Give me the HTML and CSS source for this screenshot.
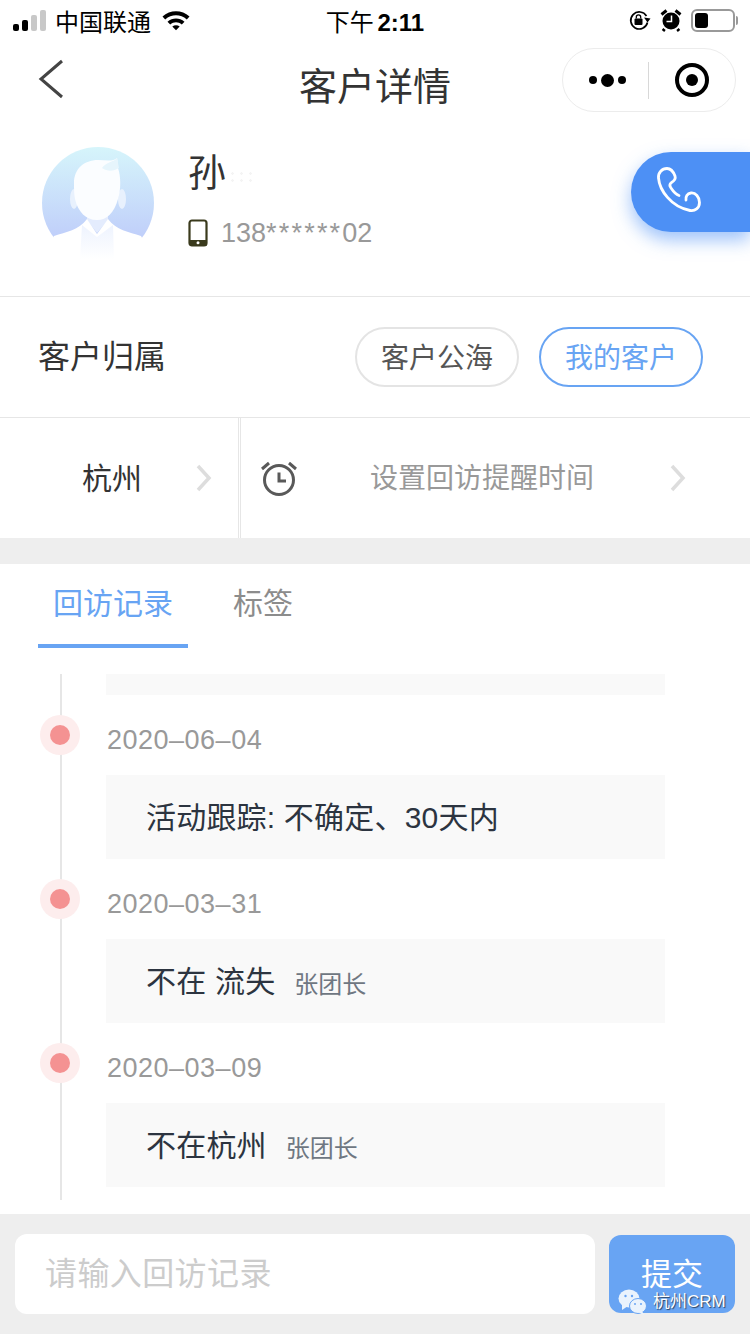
FILE: index.html
```html
<!doctype html>
<html lang="zh-CN">

<head>
    <meta charset="utf-8">
    <meta name="viewport" content="width=device-width, initial-scale=1">
    <title>客户详情</title>
    <link rel="stylesheet" href="styles.css">
</head>

<body>
<div class="page">
    <header class="status-bar">
        <div class="status-left">
            <span class="signal"><i class="on"></i><i class="on"></i><i></i><i></i></span>
            <span class="carrier">中国联通</span>
            <svg class="wifi" width="30" height="22" viewBox="0 0 30 22">
                <path d="M1.500 7.500C9 .5 21 .5 28.500 7.500L25.800 10.400C19.500 4.800 10.500 4.800 4.200 10.400Z" fill="#000"/>
                <path d="M6.500 12.700C11.500 8.300 18.500 8.300 23.500 12.700L20.800 15.500C17.300 12.500 12.700 12.500 9.200 15.500Z" fill="#000"/>
                <path d="M11.300 17.400C13.500 15.700 16.500 15.700 18.700 17.400L15 21.300Z" fill="#000"/>
            </svg>
        </div>
        <div class="status-time">下午 <b>2:11</b></div>
        <div class="status-right">
            <svg width="24" height="22" viewBox="0 0 24 22">
                <path d="M19.500 13.500A8.500 8.500 0 1 1 18.500 7" fill="none" stroke="#000" stroke-width="1.700"/>
                <path d="M16 8.500L22.500 9.500L19.500 13.500Z" fill="#000"/>
                <rect x="6.500" y="9.500" width="8" height="6.500" rx="1" fill="#000"/>
                <path d="M8.300 9.500V8A2.200 2.200 0 0 1 12.700 8V9.500" fill="none" stroke="#000" stroke-width="1.300"/>
            </svg>
            <svg class="alarm" width="22" height="24" viewBox="0 0 22 24">
                <circle cx="11" cy="13" r="8.500" fill="#000"/>
                <path d="M1.500 6.500L6.500 2.500M20.500 6.500L15.500 2.500M4.500 21L3 23M17.500 21L19 23" stroke="#000" stroke-width="3" fill="none"/>
                <path d="M11.500 7.500V13.500H6.500" stroke="#fff" stroke-width="1.500" fill="none"/>
            </svg>
            <span class="battery"><span class="battery-level"></span></span>
        </div>
    </header>

    <nav class="nav-bar">
        <svg class="nav-back" width="28" height="40" viewBox="0 0 28 40">
            <path d="M26 2L5 20L26 38" fill="none" stroke="#444" stroke-width="3"/>
        </svg>
        <h1 class="nav-title">客户详情</h1>
        <div class="capsule">
            <div class="capsule-more"><i></i><i class="big"></i><i></i></div>
            <div class="capsule-line"></div>
            <div class="capsule-close"><span></span></div>
        </div>
    </nav>

    <section class="profile">
        <svg class="avatar" width="112" height="112" viewBox="0 0 112 112">
            <defs>
                <linearGradient id="avatarBg" x1="0" y1="0" x2="0" y2="1">
                    <stop offset="0" stop-color="#d6f5fb"/>
                    <stop offset="0.8" stop-color="#c0cffa"/>
                </linearGradient>
                <linearGradient id="avatarChest" x1="0" y1="0" x2="0" y2="1">
                    <stop offset="0" stop-color="#eef3fe"/>
                    <stop offset="1" stop-color="#ffffff"/>
                </linearGradient>
            </defs>
            <circle cx="56" cy="56" r="56" fill="url(#avatarBg)"/>
            <ellipse cx="32" cy="52" rx="4" ry="10" fill="#e8f1fd"/>
            <ellipse cx="80" cy="52" rx="4" ry="10" fill="#e8f1fd"/>
            <path d="M45 60H66V73L55 86L45 73Z" fill="#e4ecfd"/>
            <path d="M32 36C32 22 42 13 56 13C63 13 71 15 75 11C76 15 75 18 76 21C79 30 79 42 76 52C72 66 65 73 55 73C44 73 36 65 33 52C32 47 32 42 32 36Z" fill="#fbfdff"/>
            <path d="M60 21C66 25 72 24 77 21L75 11C72 15 64 15 60 21Z" fill="#e6f5fc"/>
            <path d="M12 89C24 85 37 83 45 72L55 87L66 72C74 83 87 85 99 89L112 112H0Z" fill="#fff"/>
            <path d="M40 78L55 90L71 78L72 112H38Z" fill="url(#avatarChest)"/>
        </svg>
        <div class="profile-info">
            <div class="customer-name">孙<span class="name-mask"></span></div>
            <div class="customer-phone">
                <svg width="20" height="28" viewBox="0 0 20 28">
                    <rect x="1.500" y="1.500" width="17" height="25" rx="2.500" fill="none" stroke="#3a3a1c" stroke-width="2.200"/>
                    <rect x="1.500" y="21" width="17" height="5.500" fill="#3a3a1c"/>
                    <circle cx="10" cy="23.700" r="1.500" fill="#fff"/>
                </svg>
                <span>138<span class="stars">******</span>02</span>
            </div>
        </div>
        <div class="call-button">
            <svg width="48" height="48" viewBox="0 0 48 48">
                <path d="M14 2.500C9 2.500 5 6.500 5.500 12C6.500 24 18 41 37 44.500C42 45.500 46.500 42 46.500 36.500C46.500 31 42.500 26.500 38 27C34 27.500 32.500 31 33 34M14 2.500C18 2.500 20.500 6 22 10C23 13 21 15 18.500 16.500C16.500 18 16.500 20 18 22C20 25 23 28.500 26 29.500" fill="none" stroke="#fff" stroke-width="2.800" stroke-linecap="round"/>
            </svg>
        </div>
    </section>

    <section class="owner-row">
        <div class="row-label">客户归属</div>
        <div class="owner-options">
            <span class="pill">客户公海</span>
            <span class="pill active">我的客户</span>
        </div>
    </section>

    <section class="picker-row">
        <div class="city-cell">
            <span class="city-name">杭州</span>
            <svg class="chevron" width="16" height="28" viewBox="0 0 16 28">
                <path d="M2 2L13 14L2 26" fill="none" stroke="#dddddd" stroke-width="3.500"/>
            </svg>
        </div>
        <div class="remind-cell">
            <svg width="38" height="36" viewBox="0 0 38 36">
                <circle cx="19" cy="20" r="14.500" fill="none" stroke="#595959" stroke-width="3"/>
                <path d="M19 12.500V21H26" fill="none" stroke="#595959" stroke-width="3"/>
                <path d="M2 9L9 3M36 9L29 3" fill="none" stroke="#595959" stroke-width="3"/>
            </svg>
            <span class="remind-text">设置回访提醒时间</span>
            <svg class="chevron" width="16" height="28" viewBox="0 0 16 28">
                <path d="M2 2L13 14L2 26" fill="none" stroke="#dddddd" stroke-width="3.500"/>
            </svg>
        </div>
    </section>

    <div class="gap"></div>

    <section class="tabs">
        <div class="tab active">回访记录</div>
        <div class="tab">标签</div>
    </section>

    <section class="timeline">
        <div class="record-stub"></div>

        <div class="record">
            <i class="dot"></i>
            <div class="record-date">2020–06–04</div>
            <div class="record-body">活动跟踪: 不确定、30天内</div>
        </div>

        <div class="record">
            <i class="dot"></i>
            <div class="record-date">2020–03–31</div>
            <div class="record-body">不在 流失<small>张团长</small></div>
        </div>

        <div class="record">
            <i class="dot"></i>
            <div class="record-date">2020–03–09</div>
            <div class="record-body">不在杭州<small>张团长</small></div>
        </div>
    </section>

    <footer class="input-bar">
        <div class="input-box">请输入回访记录</div>
        <div class="submit-button">
            提交
            <div class="watermark">
                <svg width="30" height="26" viewBox="0 0 30 26">
                    <ellipse cx="11" cy="9.500" rx="10.500" ry="9" fill="#eaf3fd"/>
                    <path d="M4 15L4 21L10 17Z" fill="#eaf3fd"/>
                    <ellipse cx="20" cy="17" rx="8.500" ry="7.500" fill="#eaf3fd" stroke="#68a4f3"/>
                    <path d="M24 22L26 26L20 23Z" fill="#eaf3fd"/>
                    <circle cx="7.500" cy="7" r="1.200" fill="#68a4f3"/>
                    <circle cx="14" cy="7" r="1.200" fill="#68a4f3"/>
                    <circle cx="17" cy="15" r="1" fill="#68a4f3"/>
                    <circle cx="23" cy="15" r="1" fill="#68a4f3"/>
                </svg>
                <span>杭州CRM</span>
            </div>
        </div>
    </footer>
</div>
</body>
</html>
```

FILE: styles.css
```css
:root {
    --color-text: #333;
    --color-muted: #999;
    --color-blue: #68a4f3;
    --color-line: #e6e6e6;
    --color-gray-bg: #eeeeee;
    --color-card: #f9f9f9;
    --font-stack: "Liberation Sans", "Noto Sans CJK SC", sans-serif;
}

*, *::before, *::after {
    box-sizing: border-box;
}

html, body {
    margin: 0;
    padding: 0;
}

body {
    font-family: var(--font-stack);
    color: var(--color-text);
    background: #fff;
}

.page {
    width: 750px;
    height: 1334px;
    overflow: hidden;
    display: flex;
    flex-direction: column;
}

/* Status bar */
.status-bar {
    height: 40px;
    padding: 0 15px 0 13px;
    display: grid;
    grid-template-columns: 1fr auto 1fr;
    align-items: center;
    color: #000;
    font-size: 24px;
}

.status-left {
    display: flex;
    align-items: center;
}

.signal {
    display: flex;
    align-items: flex-end;
    gap: 3px;
    height: 22px;
}

.signal i {
    width: 6px;
    border-radius: 2px;
    background: #c8c8c8;
}

.signal i:nth-child(1) { height: 7px; }
.signal i:nth-child(2) { height: 11px; }
.signal i:nth-child(3) { height: 16px; }
.signal i:nth-child(4) { height: 21px; }
.signal i.on { background: #000; }

.carrier {
    margin-left: 9px;
}

.wifi {
    margin-left: 10px;
}

.status-time {
    word-spacing: -3px;
    padding-left: 2px;
}

.status-right {
    display: flex;
    align-items: center;
    justify-content: flex-end;
    gap: 8px;
}

.status-right .alarm {
    margin-right: 1px;
}

.battery {
    position: relative;
    width: 44px;
    height: 23px;
    padding: 2px;
    border: 2px solid #999;
    border-radius: 6px;
    display: block;
}

.battery::after {
    content: "";
    position: absolute;
    right: -5px;
    top: 5px;
    width: 2px;
    height: 9px;
    border-radius: 0 2px 2px 0;
    background: #999;
}

.battery-level {
    display: block;
    width: 13px;
    height: 100%;
    border-radius: 3px;
    background: #000;
}

/* Nav bar */
.nav-bar {
    height: 88px;
    padding: 0 14px;
    display: grid;
    grid-template-columns: 1fr auto 1fr;
    align-items: center;
}

.nav-back {
    margin: -10px 0 0 22px;
}

.nav-title {
    margin: 6px 0 0;
    font-size: 38px;
    font-weight: 400;
    line-height: 1;
}

.capsule {
    justify-self: end;
    width: 174px;
    height: 64px;
    margin-top: -8px;
    border: 1px solid #ececec;
    border-radius: 32px;
    display: flex;
    align-items: center;
}

.capsule-more {
    flex: 1;
    display: flex;
    align-items: center;
    justify-content: center;
    gap: 4px;
    padding-left: 3px;
}

.capsule-more i {
    width: 8px;
    height: 8px;
    border-radius: 50%;
    background: #000;
}

.capsule-more i.big {
    width: 13px;
    height: 13px;
}

.capsule-line {
    width: 1px;
    height: 37px;
    background: #d8d8d8;
}

.capsule-close {
    width: 86px;
    display: flex;
    justify-content: center;
}

.capsule-close span {
    width: 34px;
    height: 34px;
    border: 4px solid #000;
    border-radius: 50%;
    display: flex;
    align-items: center;
    justify-content: center;
}

.capsule-close span::before {
    content: "";
    width: 12px;
    height: 12px;
    border-radius: 50%;
    background: #000;
}

/* Profile */
.profile {
    height: 169px;
    padding: 19px 0 0 42px;
    border-bottom: 1px solid var(--color-line);
    display: flex;
    align-items: flex-start;
    position: relative;
}

.profile-info {
    margin-left: 34px;
}

.customer-name {
    display: flex;
    align-items: center;
    font-size: 38px;
    line-height: 52px;
}

.name-mask {
    width: 24px;
    height: 14px;
    margin: 8px 0 0 2px;
    background: radial-gradient(circle, #f4f4f4 1px, transparent 1.500px) 0 0 / 9px 7px;
}

.customer-phone {
    margin-top: 17px;
    display: flex;
    align-items: center;
    gap: 13px;
    font-size: 27px;
    color: var(--color-muted);
    line-height: 34px;
}

.stars {
    letter-spacing: 2.200px;
}

.call-button {
    position: absolute;
    right: 0;
    top: 24px;
    width: 119px;
    height: 80px;
    padding: 14px 0 0 22px;
    background: #4d90f5;
    border-radius: 40px 0 0 40px;
    box-shadow: 0 8px 18px rgb(77 144 245 / 0.55);
}

/* Owner row */
.owner-row {
    height: 121px;
    padding: 0 47px 0 38px;
    border-bottom: 1px solid var(--color-line);
    display: flex;
    align-items: center;
    justify-content: space-between;
}

.row-label {
    padding-bottom: 6px;
    font-size: 32px;
}

.owner-options {
    display: flex;
    gap: 20px;
}

.pill {
    width: 164px;
    height: 60px;
    padding-bottom: 2px;
    border: 2px solid #e4e4e4;
    border-radius: 30px;
    font-size: 28px;
    color: #555;
    display: flex;
    align-items: center;
    justify-content: center;
}

.pill.active {
    border-color: var(--color-blue);
    color: var(--color-blue);
}

/* City and reminder */
.picker-row {
    height: 120px;
    display: flex;
}

.city-cell {
    width: 241px;
    padding: 0 26px 0 82px;
    border-right: 3px double #e6e6e6;
    display: flex;
    align-items: center;
    justify-content: space-between;
}

.city-name {
    padding-bottom: 4px;
    font-size: 30px;
}

.remind-cell {
    flex: 1;
    padding: 0 64px 0 19px;
    display: flex;
    align-items: center;
}

.remind-text {
    flex: 1;
    padding: 0 0 4px 72px;
    font-size: 28px;
    color: var(--color-muted);
}

.gap {
    height: 26px;
    background: var(--color-gray-bg);
}

/* Tabs */
.tabs {
    height: 84px;
    padding-left: 38px;
    display: flex;
    gap: 30px;
}

.tab {
    padding: 0 15px;
    font-size: 30px;
    line-height: 80px;
    color: #8c8c8c;
}

.tab.active {
    color: var(--color-blue);
    border-bottom: 4px solid var(--color-blue);
}

/* Timeline */
.timeline {
    height: 526px;
    margin: 26px 0 14px 60px;
    padding-left: 44px;
    border-left: 2px solid var(--color-line);
}

.record-stub {
    width: 559px;
    height: 21px;
    background: var(--color-card);
}

.record {
    position: relative;
    height: 164px;
}

.dot {
    position: absolute;
    left: -66px;
    top: 20px;
    width: 40px;
    height: 40px;
    border-radius: 50%;
    background: #fdeded;
}

.dot::after {
    content: "";
    position: absolute;
    left: 10px;
    top: 10px;
    width: 20px;
    height: 20px;
    border-radius: 50%;
    background: #f49292;
}

.record-date {
    padding: 28px 0 0 1px;
    font-size: 27px;
    line-height: 34px;
    letter-spacing: 0.500px;
    color: var(--color-muted);
}

.record-body {
    width: 559px;
    height: 84px;
    margin-top: 18px;
    padding: 0 0 4px 40px;
    background: var(--color-card);
    display: flex;
    align-items: center;
    font-size: 30px;
    letter-spacing: 0.200px;
    color: #2c3440;
    white-space: pre;
}

.record-body small {
    margin: 6px 0 0 19px;
    font-size: 24px;
    letter-spacing: 0;
    color: #6f7782;
}

/* Input bar */
.input-bar {
    flex: 1;
    background: var(--color-gray-bg);
    padding: 20px 15px;
    display: flex;
    align-items: flex-start;
    gap: 14px;
}

.input-box {
    width: 580px;
    height: 80px;
    padding: 0 0 7px 30px;
    background: #fff;
    border-radius: 12px;
    display: flex;
    align-items: center;
    font-size: 32px;
    letter-spacing: 0.400px;
    color: #ccc;
}

.submit-button {
    position: relative;
    width: 126px;
    height: 78px;
    margin-top: 1px;
    background: var(--color-blue);
    border-radius: 12px;
    color: #fff;
    font-size: 31px;
    text-align: center;
    line-height: 80px;
}

.watermark {
    position: absolute;
    left: 9px;
    bottom: -2px;
    display: flex;
    align-items: center;
    gap: 5px;
    font-size: 17px;
    line-height: 26px;
    color: #fff;
    text-shadow: 1px 1px 1px rgb(0 0 0 / 0.6);
}
```
